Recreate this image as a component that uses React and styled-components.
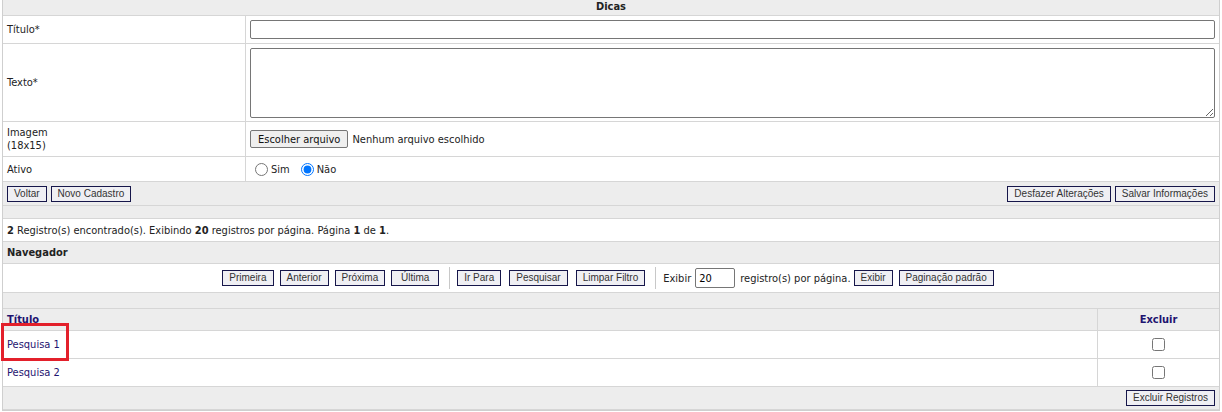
import styled, { createGlobalStyle } from 'styled-components';

const GlobalStyle = createGlobalStyle`
  html, body {
    margin: 0;
    padding: 0;
    background: #ffffff;
  }
  body {
    font-family: "DejaVu Sans Condensed", "DejaVu Sans", Verdana, sans-serif;
    font-size: 11px;
    color: #222;
  }
`;

const Page = styled.div`
  position: relative;
  margin: 0 2px;
  border-left: 1px solid #cfcfcf;
  border-right: 1px solid #cfcfcf;
  border-bottom: 1px solid #cfcfcf;
`;

const Header = styled.div`
  height: 15px;
  line-height: 14px;
  background: #ededed;
  border-bottom: 1px solid #d6d6d6;
  text-align: center;
  font-weight: bold;
  color: #222;
`;

const FormGrid = styled.div`
  display: grid;
  grid-template-columns: 243px 1fr;
`;

const Label = styled.div`
  display: flex;
  align-items: center;
  padding-left: 4px;
  height: ${(p) => p.$h}px;
  border-bottom: 1px solid #d6d6d6;
  border-right: 1px solid #d6d6d6;
  line-height: 13px;
`;

const Field = styled.div`
  display: flex;
  align-items: center;
  padding: 0 4px 0 4px;
  height: ${(p) => p.$h}px;
  border-bottom: 1px solid #d6d6d6;
  gap: 4px;
`;

const TextInput = styled.input`
  box-sizing: border-box;
  width: 100%;
  height: 19px;
  border: 1px solid #767676;
  border-radius: 2px;
  padding: 0 3px;
  font: inherit;
`;

const TextArea = styled.textarea`
  box-sizing: border-box;
  width: 100%;
  height: 70px;
  border: 1px solid #767676;
  border-radius: 2px;
  resize: vertical;
  font: inherit;
`;

const FileButton = styled.button`
  height: 18px;
  padding: 0 7px;
  border: 1px solid #767676;
  border-radius: 2px;
  background: #efefef;
  font-family: inherit;
  font-size: 11px;
  color: #111;
`;

const RadioLabel = styled.label`
  display: inline-flex;
  align-items: center;
  gap: 1px;
  margin-right: 2px;
  input {
    margin: 0 2px 0 5px;
    width: 13px;
    height: 13px;
  }
`;

const ActionBar = styled.div`
  display: flex;
  align-items: center;
  justify-content: ${(p) => p.$justify || 'space-between'};
  height: ${(p) => p.$h}px;
  padding: 0 4px;
  background: #ededed;
  border-bottom: 1px solid #d6d6d6;
`;

const Group = styled.div`
  display: flex;
  align-items: center;
  gap: ${(p) => p.$gap ?? 4}px;
  margin-left: ${(p) => p.$ml ?? 0}px;
`;

const Btn = styled.button`
  box-sizing: border-box;
  height: 16px;
  min-width: ${(p) => p.$w || 0}px;
  padding: 0 6px;
  border: 1px solid #16164a;
  background: #efeff3;
  font-family: "Liberation Sans", Arial, sans-serif;
  font-size: 10px;
  line-height: 14px;
  color: #333;
  cursor: pointer;
`;

const Spacer = styled.div`
  height: ${(p) => p.$h}px;
  background: #ededed;
  border-bottom: 1px solid #d6d6d6;
`;

const InfoRow = styled.div`
  height: 22px;
  display: flex;
  align-items: center;
  padding-left: 4px;
  border-bottom: 1px solid #d6d6d6;
  b {
    font-weight: bold;
  }
`;

const SectionTitle = styled.div`
  height: 21px;
  display: flex;
  align-items: center;
  padding-left: 4px;
  background: #ededed;
  border-bottom: 1px solid #d6d6d6;
  font-weight: bold;
  color: #222;
`;

const NavRow = styled.div`
  height: 28px;
  display: flex;
  align-items: center;
  justify-content: center;
  border-bottom: 1px solid #d6d6d6;
  padding-right: 6px;
`;

const Divider = styled.span`
  width: 1px;
  height: 22px;
  background: #c8c8c8;
  margin: 0 7px 0 10px;
`;

const SmallInput = styled.input`
  box-sizing: border-box;
  width: 40px;
  height: 20px;
  border: 1px solid #767676;
  border-radius: 2px;
  padding: 0 3px;
  font: inherit;
  margin: 0 5px 0 4px;
`;

const Table = styled.div`
  display: grid;
  grid-template-columns: 1fr 121px;
`;

const HeadCell = styled.div`
  height: 21px;
  display: flex;
  align-items: center;
  justify-content: ${(p) => (p.$center ? 'center' : 'flex-start')};
  padding-left: ${(p) => (p.$center ? 0 : 4)}px;
  background: #ededed;
  border-bottom: 1px solid #d6d6d6;
  border-right: ${(p) => (p.$center ? 'none' : '1px solid #d6d6d6')};
  font-weight: bold;
  color: #1e1470;
`;

const Cell = styled.div`
  height: 27px;
  display: flex;
  align-items: center;
  justify-content: ${(p) => (p.$center ? 'center' : 'flex-start')};
  padding-left: ${(p) => (p.$center ? 0 : 4)}px;
  border-bottom: 1px solid #d6d6d6;
  border-right: ${(p) => (p.$center ? 'none' : '1px solid #d6d6d6')};
  input {
    margin: 0;
    width: 13px;
    height: 13px;
  }
`;

const Link = styled.a`
  color: #1e1470;
  text-decoration: none;
  cursor: pointer;
`;

const Highlight = styled.div`
  position: absolute;
  box-sizing: border-box;
  left: -2px;
  top: 323px;
  width: 68px;
  height: 38px;
  border: 3px solid #e3202b;
  pointer-events: none;
`;

export default function App() {
  return (
    <>
      <GlobalStyle />
      <Page>
        <Header>Dicas</Header>
        <FormGrid>
          <Label $h={27}>Título*</Label>
          <Field $h={27}>
            <TextInput type="text" />
          </Field>
          <Label $h={77}>Texto*</Label>
          <Field $h={77}>
            <TextArea />
          </Field>
          <Label $h={34}>
            Imagem
            <br />
            (18x15)
          </Label>
          <Field $h={34}>
            <FileButton type="button">Escolher arquivo</FileButton>
            <span>Nenhum arquivo escolhido</span>
          </Field>
          <Label $h={24}>Ativo</Label>
          <Field $h={24}>
            <RadioLabel>
              <input type="radio" name="ativo" /> Sim
            </RadioLabel>
            <RadioLabel>
              <input type="radio" name="ativo" defaultChecked /> Não
            </RadioLabel>
          </Field>
        </FormGrid>
        <ActionBar $h={23}>
          <Group>
            <Btn>Voltar</Btn>
            <Btn>Novo Cadastro</Btn>
          </Group>
          <Group>
            <Btn>Desfazer Alterações</Btn>
            <Btn>Salvar Informações</Btn>
          </Group>
        </ActionBar>
        <Spacer $h={12} />
        <InfoRow>
          <span>
            <b>2</b> Registro(s) encontrado(s). Exibindo <b>20</b> registros por página. Página{' '}
            <b>1</b> de <b>1</b>.
          </span>
        </InfoRow>
        <SectionTitle>Navegador</SectionTitle>
        <NavRow>
          <Group $gap={6}>
            <Btn $w={48}>Primeira</Btn>
            <Btn $w={48}>Anterior</Btn>
            <Btn $w={48}>Próxima</Btn>
            <Btn $w={48}>Última</Btn>
          </Group>
          <Divider />
          <Group $gap={8}>
            <Btn>Ir Para</Btn>
            <Btn>Pesquisar</Btn>
            <Btn>Limpar Filtro</Btn>
          </Group>
          <Divider />
          <span>Exibir</span>
          <SmallInput type="text" defaultValue="20" />
          <span>registro(s) por página.</span>
          <Group $gap={6} $ml={3}>
            <Btn>Exibir</Btn>
            <Btn>Paginação padrão</Btn>
          </Group>
        </NavRow>
        <Spacer $h={15} />
        <Table>
          <HeadCell>Título</HeadCell>
          <HeadCell $center>Excluir</HeadCell>
          <Cell>
            <Link>Pesquisa 1</Link>
          </Cell>
          <Cell $center>
            <input type="checkbox" />
          </Cell>
          <Cell>
            <Link>Pesquisa 2</Link>
          </Cell>
          <Cell $center>
            <input type="checkbox" />
          </Cell>
        </Table>
        <ActionBar $h={22} $justify="flex-end">
          <Btn>Excluir Registros</Btn>
        </ActionBar>
        <Highlight />
      </Page>
    </>
  );
}
